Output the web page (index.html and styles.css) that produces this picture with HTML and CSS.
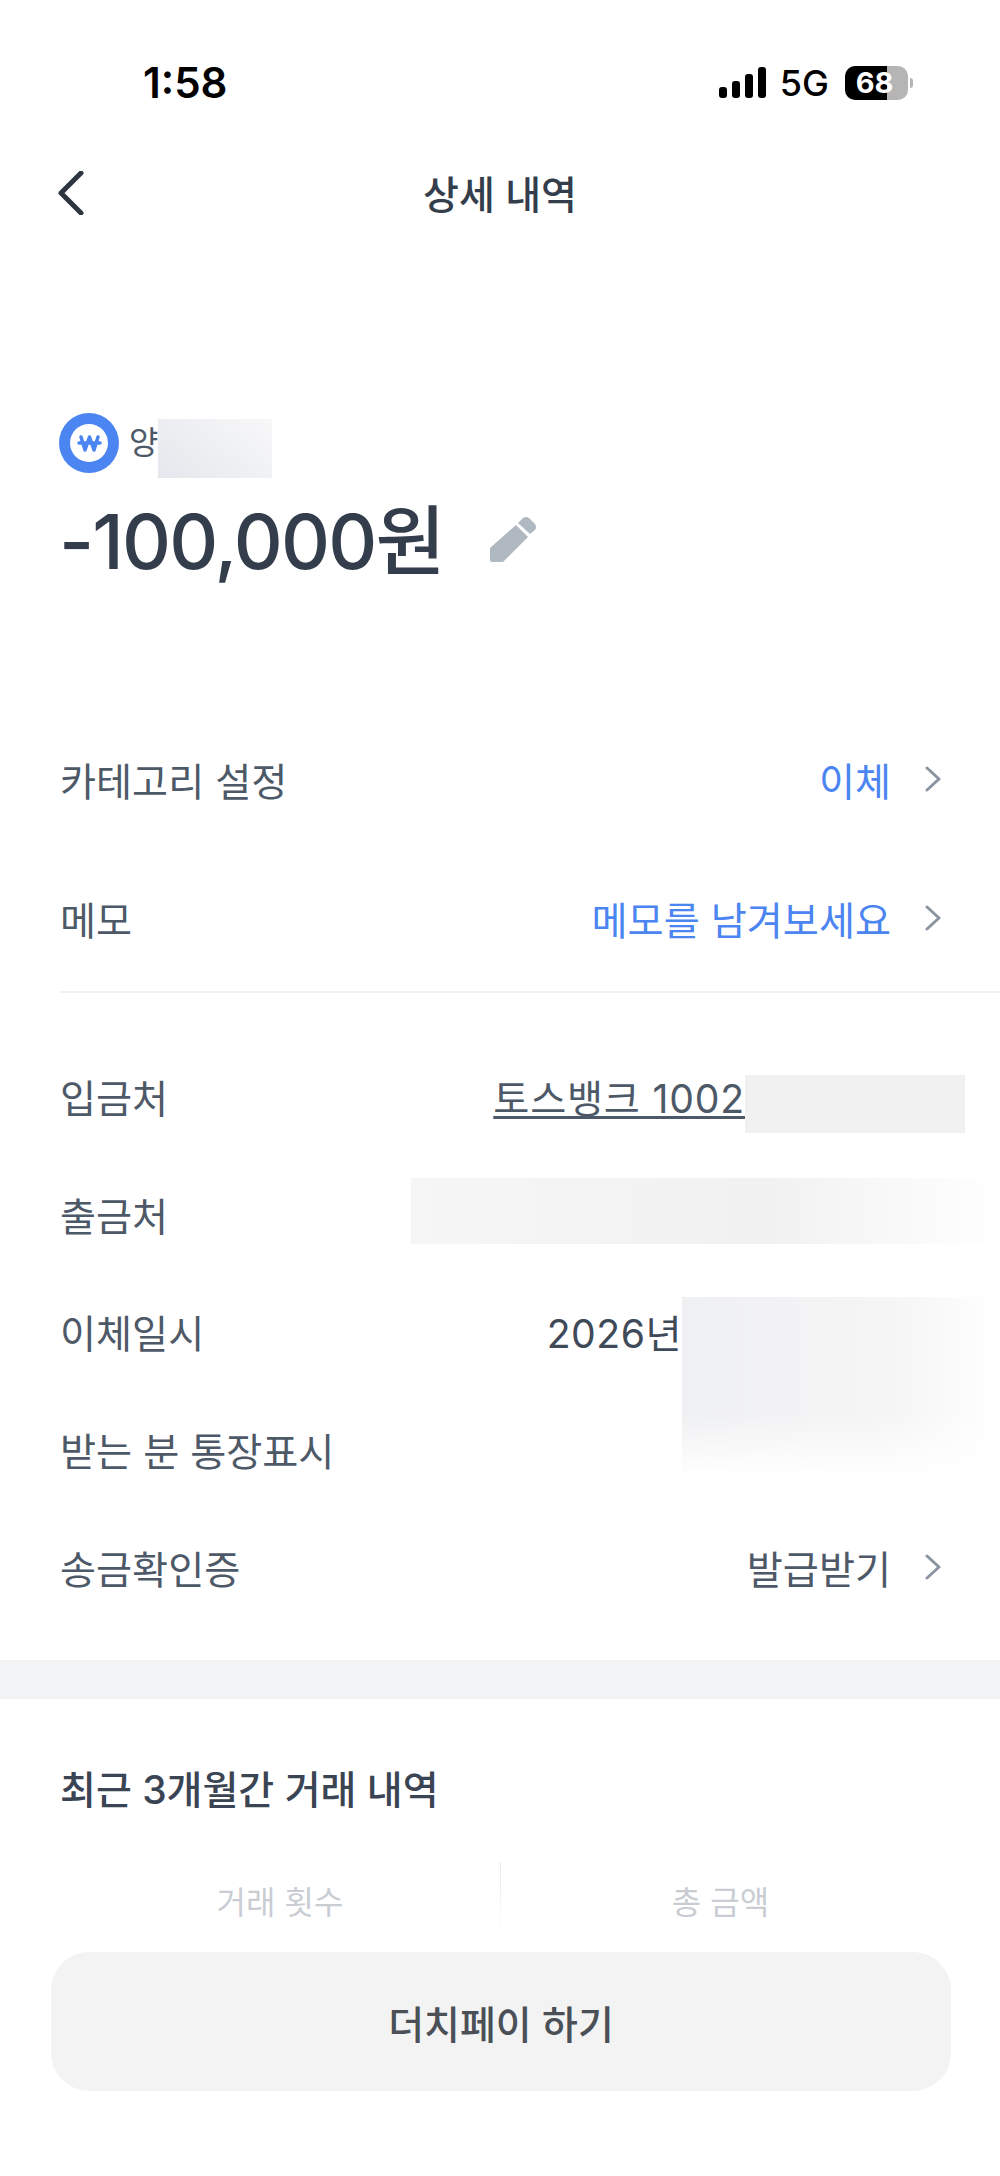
FILE: index.html
```html
<!DOCTYPE html>
<html lang="ko">
<head>
  <meta charset="UTF-8">
  <meta name="viewport" content="width=device-width, initial-scale=1.0">
  <link rel="stylesheet" href="styles.css">
  <title>상세 내역</title>
</head>
<body>
  <div class="status-bar">
    <span class="time">1:58</span>
    <div class="status-icons">
      <svg class="signal" width="48" height="31" viewBox="0 0 48 31">
        <rect x="0" y="20" width="8" height="11" rx="3" />
        <rect x="13" y="14" width="8" height="17" rx="3" />
        <rect x="26" y="7" width="8" height="24" rx="3" />
        <rect x="39" y="0" width="8" height="31" rx="3" />
      </svg>
      <span class="network">5G</span>
      <div class="battery"><span class="battery-level">68</span></div>
    </div>
  </div>

  <div class="nav-bar">
    <svg class="back" width="26" height="44" viewBox="0 0 26 44">
      <path d="M23 2 L3 22 L23 42" />
    </svg>
    <h1 class="nav-title">상세 내역</h1>
  </div>

  <div class="summary">
    <div class="payee">
      <svg class="won-icon" width="60" height="60" viewBox="0 0 60 60">
        <circle cx="30" cy="30" r="30" fill="#4b85f1" />
        <circle cx="30" cy="30" r="19" fill="#fff" />
        <path d="M22 24 L26 37 L30.500 24 L35 37 L39 24 M20 30 H41" fill="none" stroke="#4b85f1" stroke-width="3.500" stroke-linecap="round" stroke-linejoin="round" />
      </svg>
      <span class="payee-name">양</span>
      <div class="redact redact-name"></div>
    </div>
    <div class="amount-line">
      <span class="amount">-100,000원</span>
      <svg class="pencil" width="47" height="47" viewBox="0 0 47 47">
        <path d="M0 32 L26 9 L38 21 L13 46 H2 Q0 46 0 44 Z" fill="#b0b8c1" />
        <path d="M28 7 L33 2 Q36 0 39 2 L45 8 Q47 11 45 14 L40 18 Z" fill="#b0b8c1" />
      </svg>
    </div>
  </div>

  <div class="edit-list">
    <div class="row edit-row">
      <span class="label">카테고리 설정</span>
      <span class="value blue">이체</span>
      <svg class="chevron" width="16" height="26" viewBox="0 0 16 26"><path d="M2 2 L14 13 L2 24" /></svg>
    </div>
    <div class="row edit-row">
      <span class="label">메모</span>
      <span class="value blue">메모를 남겨보세요</span>
      <svg class="chevron" width="16" height="26" viewBox="0 0 16 26"><path d="M2 2 L14 13 L2 24" /></svg>
    </div>
  </div>

  <div class="info-list">
    <div class="row info-row">
      <span class="label">입금처</span>
      <span class="value account"><u>토스뱅크 1002</u></span>
      <div class="redact redact-account"></div>
    </div>
    <div class="row info-row">
      <span class="label">출금처</span>
      <div class="redact redact-from"></div>
    </div>
    <div class="row info-row">
      <span class="label">이체일시</span>
      <span class="value date">2026년</span>
      <div class="redact redact-date"></div>
    </div>
    <div class="row info-row">
      <span class="label">받는 분 통장표시</span>
    </div>
    <div class="row info-row">
      <span class="label">송금확인증</span>
      <span class="value">발급받기</span>
      <svg class="chevron" width="16" height="26" viewBox="0 0 16 26"><path d="M2 2 L14 13 L2 24" /></svg>
    </div>
  </div>

  <div class="band"></div>

  <div class="history">
    <h2 class="history-title">최근 3개월간 거래 내역</h2>
    <div class="stats">
      <span class="stat">거래 횟수</span>
      <span class="stat stat-right">총 금액</span>
    </div>
  </div>

  <div class="bottom-bar">
    <button class="dutch-btn">더치페이 하기</button>
  </div>
</body>
</html>
```

FILE: styles.css
```css
* {
  box-sizing: border-box;
}

html,
body {
  margin: 0;
  padding: 0;
}

body {
  position: relative;
  height: 2176px;
  overflow: hidden;
  background-color: #fff;
  font-family: Inter, "Noto Sans CJK KR", sans-serif;
  color: #4e5968;
}

/* status bar */
.status-bar {
  display: flex;
  justify-content: space-between;
  align-items: center;
  height: 165px;
  padding: 0 92px 0 143px;
  color: #000;
}

.time {
  font-size: 42px;
  font-weight: 600;
  line-height: 1;
}

.status-icons {
  display: flex;
  align-items: center;
  gap: 13px;
}

.signal {
  fill: #000;
}

.network {
  margin-right: 3px;
  font-size: 36px;
  font-weight: 500;
  line-height: 1;
}

.battery {
  position: relative;
  width: 63px;
  height: 34px;
  border-radius: 10px;
  background: linear-gradient(to right, #000 0, #000 42px, #b5b5b5 42px);
  text-align: center;
}

.battery::after {
  content: "";
  position: absolute;
  right: -5px;
  top: 12px;
  width: 3px;
  height: 10px;
  border-radius: 0 3px 3px 0;
  background-color: #b5b5b5;
}

.battery-level {
  color: #fff;
  font-size: 29px;
  font-weight: 700;
  line-height: 34px;
  margin-right: 4px;
}

/* nav */
.nav-bar {
  position: relative;
  display: flex;
  justify-content: center;
  align-items: center;
  height: 60px;
}

.back {
  position: absolute;
  left: 58px;
  top: 6px;
}

.back path {
  fill: none;
  stroke: #2f3540;
  stroke-width: 5;
  stroke-linecap: round;
  stroke-linejoin: round;
}

.nav-title {
  margin: 0;
  font-size: 39px;
  font-weight: 500;
  line-height: 60px;
  color: #333d4b;
}

/* amount */
.summary {
  padding: 188px 0 0 59px;
}

.payee {
  position: relative;
  display: flex;
  align-items: center;
  height: 60px;
}

.payee-name {
  margin-left: 10px;
  font-size: 32px;
  line-height: 60px;
}

.redact {
  position: absolute;
}

.redact-name {
  left: 99px;
  top: 6px;
  width: 114px;
  height: 59px;
  background: linear-gradient(40deg, #e4e7ec, #f8f8f9);
}

.amount-line {
  display: flex;
  align-items: center;
  margin-top: 18px;
  height: 90px;
}

.amount {
  font-size: 76px;
  font-weight: 550;
  letter-spacing: -1.800px;
  color: #333d4b;
}

.pencil {
  margin-left: 46px;
  margin-top: 6px;
}

/* rows */
.row {
  position: relative;
  display: flex;
  align-items: center;
  padding: 0 60px;
  font-size: 39.200px;
}

.label {
  flex: 1;
  color: #4e5968;
}

.value {
  color: #4e5968;
}

.blue {
  color: #4b85f1;
}

.chevron {
  margin-left: 34px;
  margin-right: -1px;
}

.chevron path {
  fill: none;
  stroke: #8b95a1;
  stroke-width: 3;
  stroke-linecap: round;
  stroke-linejoin: round;
}

.edit-list {
  margin-top: 128px;
  margin-left: 60px;
  padding-bottom: 4px;
  border-bottom: 2px solid #f0f1f3;
}

.edit-row {
  height: 139px;
  padding-left: 0;
}

.info-list {
  position: relative;
  padding-top: 44px;
}

.info-row {
  height: 117.700px;
}

.account {
  margin-right: 195px;
  letter-spacing: 0.800px;
}

.account u {
  text-decoration-thickness: 3px;
  text-underline-offset: 3px;
}

.date {
  margin-right: 258px;
  letter-spacing: 0.500px;
  color: #3f4a59;
}

.redact-account {
  left: 745px;
  top: 38px;
  width: 220px;
  height: 58px;
  background-color: #f1f1f1;
}

.redact-from {
  left: 411px;
  top: 23px;
  width: 589px;
  height: 66px;
  background: linear-gradient(to right, #f6f6f6 0, #f1f1f2 60%, #fff 100%);
}

.redact-date {
  left: 682px;
  top: 25px;
  width: 318px;
  height: 179px;
  background: linear-gradient(to bottom, rgba(255, 255, 255, 0) 65%, #fff 100%), linear-gradient(to right, #eff0f2 0, #f5f5f6 65%, #fff 100%);
}

.band {
  height: 39px;
  margin-top: 35px;
  background-color: #f2f3f5;
}

/* last 3 months */
.history {
  padding: 0 60px;
}

.history-title {
  margin: 61px 0 0;
  font-size: 39px;
  font-weight: 500;
  line-height: 60px;
  color: #3a4452;
}

.stats {
  display: grid;
  grid-template-columns: 1fr 1fr;
  margin-top: 42px;
  height: 62px;
}

.stat {
  padding-top: 11px;
  font-size: 32px;
  line-height: 60px;
  text-align: center;
  color: #c9cdd3;
}

.stat-right {
  border-left: 1px solid #eceef0;
  border-image: linear-gradient(#e6e8eb, #fff) 1;
}

/* pinned button */
.bottom-bar {
  position: absolute;
  left: 0;
  right: 0;
  bottom: 0;
  height: 224px;
  padding: 0 49px 0 51px;
}

.dutch-btn {
  display: block;
  width: 100%;
  height: 139px;
  border: none;
  border-radius: 38px;
  background-color: #f3f3f4;
  font-family: inherit;
  font-size: 39px;
  font-weight: 500;
  color: #4b4f56;
}
```
